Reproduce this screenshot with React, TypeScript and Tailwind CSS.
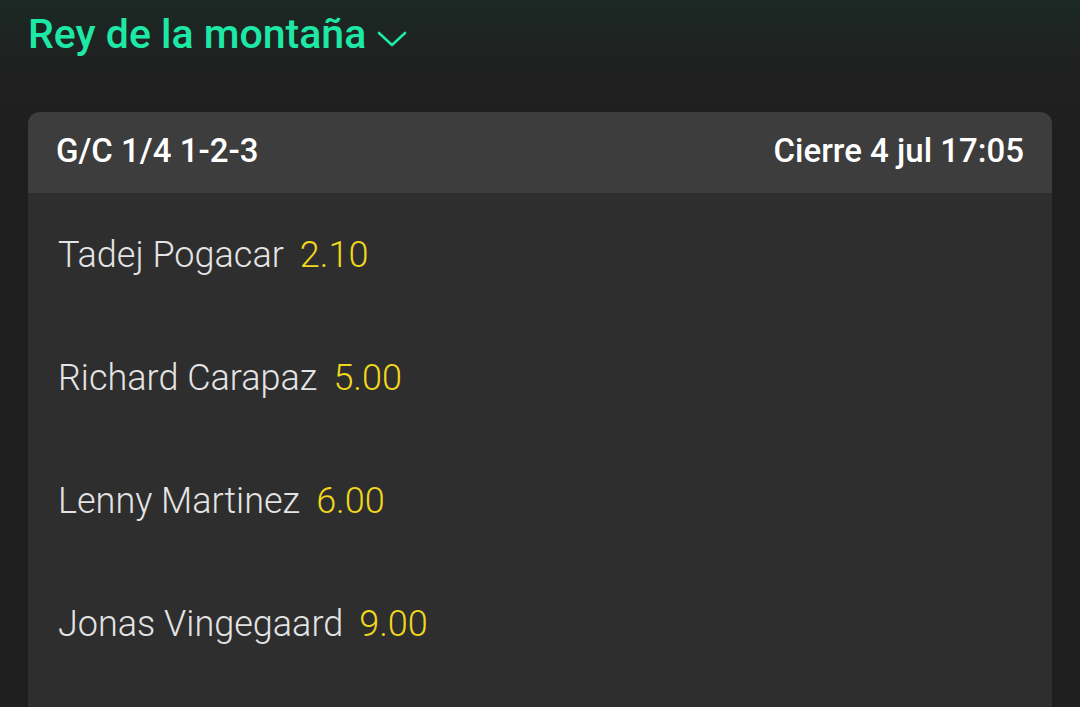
const runners = [
  { name: 'Tadej Pogacar', price: '2.10' },
  { name: 'Richard Carapaz', price: '5.00' },
  { name: 'Lenny Martinez', price: '6.00' },
  { name: 'Jonas Vingegaard', price: '9.00' },
];

function Chevron() {
  return (
    <svg width="30" height="18" viewBox="0 0 30 18" fill="none" className="mt-[10px]">
      <path d="M2 3 L15 15 L28 3" stroke="#1ee8a6" strokeWidth="2.6" strokeLinecap="round" strokeLinejoin="round" />
    </svg>
  );
}

export default function App() {
  return (
    <div
      className="flex h-[707px] w-[1080px] flex-col overflow-hidden bg-[linear-gradient(180deg,#1b2924_0%,#1f2120_60px,#1f1f1f_110px)]"
      style={{ fontFamily: 'Roboto, "Liberation Sans", sans-serif' }}
    >
      <div className="flex h-[68px] shrink-0 items-center gap-[11px] pl-[28px]">
        <span className="text-[41px] font-medium leading-none text-[#1ee8a6]">Rey de la montaña</span>
        <Chevron />
      </div>

      <div className="ml-[28px] mt-[44px] w-[1024px] flex-1 overflow-hidden rounded-t-[12px] bg-[#2e2e2e]">
        <div className="flex h-[81px] items-center justify-between bg-[#3d3d3d] px-[28px] pb-[4px] text-[33px] font-medium text-white">
          <span>G/C 1/4 1-2-3</span>
          <span>Cierre 4 jul 17:05</span>
        </div>
        {runners.map((r) => (
          <div key={r.name} className="flex h-[123px] items-center gap-[16px] px-[30px] text-[36px] font-light">
            <span className="text-[#e4e4e4]">{r.name}</span>
            <span className="text-[#f2d81c]">{r.price}</span>
          </div>
        ))}
      </div>
    </div>
  );
}
